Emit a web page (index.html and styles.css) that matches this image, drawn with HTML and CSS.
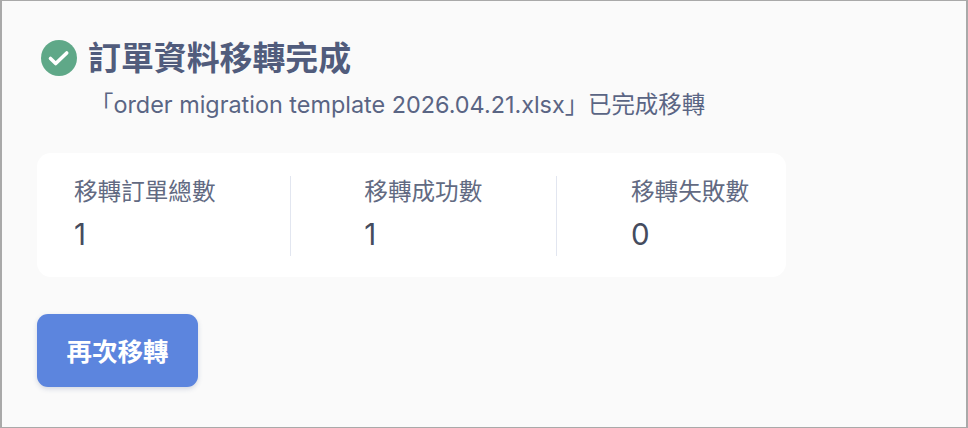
FILE: index.html
```html
<!DOCTYPE html>
<html lang="zh-Hant">
<head>
    <meta charset="UTF-8">
    <title>訂單資料移轉完成</title>
    <link rel="stylesheet" href="styles.css">
</head>
<body>
<div class="page">
    <div class="result-head">
        <svg class="check-icon" viewBox="0 0 36 36" width="36" height="36">
            <circle cx="18" cy="18" r="18" fill="#5fa888"/>
            <path d="M9.5 18.5l5.2 5 11-10.5" fill="none" stroke="#fff" stroke-width="3.6" stroke-linecap="round" stroke-linejoin="round"/>
        </svg>
        <h1 class="result-title">訂單資料移轉完成</h1>
    </div>
    <p class="result-desc">「order migration template 2026.04.21.xlsx」已完成移轉</p>
    <div class="stat-card">
        <div class="stat">
            <div class="stat-label">移轉訂單總數</div>
            <div class="stat-value">1</div>
        </div>
        <div class="stat-line"></div>
        <div class="stat">
            <div class="stat-label">移轉成功數</div>
            <div class="stat-value">1</div>
        </div>
        <div class="stat-line"></div>
        <div class="stat">
            <div class="stat-label">移轉失敗數</div>
            <div class="stat-value">0</div>
        </div>
    </div>
    <button class="again-btn" type="button">再次移轉</button>
</div>
</body>
</html>
```

FILE: styles.css
```css
html, body {
    margin: 0;
    height: 100%;
}
body {
    font-family: Inter, "Noto Sans CJK TC", sans-serif;
}
.page {
    box-sizing: border-box;
    width: 968px;
    height: 428px;
    padding: 39px 37px 0 35px;
    background: #fafafa;
    border: solid #a9a9a9;
    border-width: 1px 2px 1px 2px;
}
.result-head {
    display: flex;
    align-items: center;
    gap: 11px;
    margin-left: 4px;
    height: 36px;
}
.result-title {
    margin: 0;
    font-size: 32.9px;
    line-height: 36px;
    font-weight: 700;
    color: #515c7c;
}
.result-desc {
    margin: 15px 0 0 53px;
    font-size: 23.4px;
    line-height: 28px;
    white-space: nowrap;
    color: #5a6584;
}
.stat-card {
    display: flex;
    gap: 74px;
    width: 749px;
    height: 124px;
    box-sizing: border-box;
    margin-top: 34px;
    padding: 23px 37px 0;
    background: #fff;
    border-radius: 14px;
}
.stat-label {
    font-size: 23.6px;
    line-height: 32px;
    color: #626a82;
    white-space: nowrap;
}
.stat-value {
    margin-top: 8px;
    font-size: 29.5px;
    line-height: 36px;
    color: #454c5e;
}
.stat-line {
    width: 1px;
    height: 80px;
    background: #e2e6f0;
}
.again-btn {
    display: block;
    width: 161px;
    height: 73px;
    margin-top: 37px;
    padding: 0 0 3px;
    border: 0;
    border-radius: 11px;
    background: #5c85de;
    box-shadow: 0 2px 5px rgba(60, 80, 130, 0.2);
    color: #fff;
    font-family: inherit;
    font-size: 25.5px;
    font-weight: 700;
}
```
